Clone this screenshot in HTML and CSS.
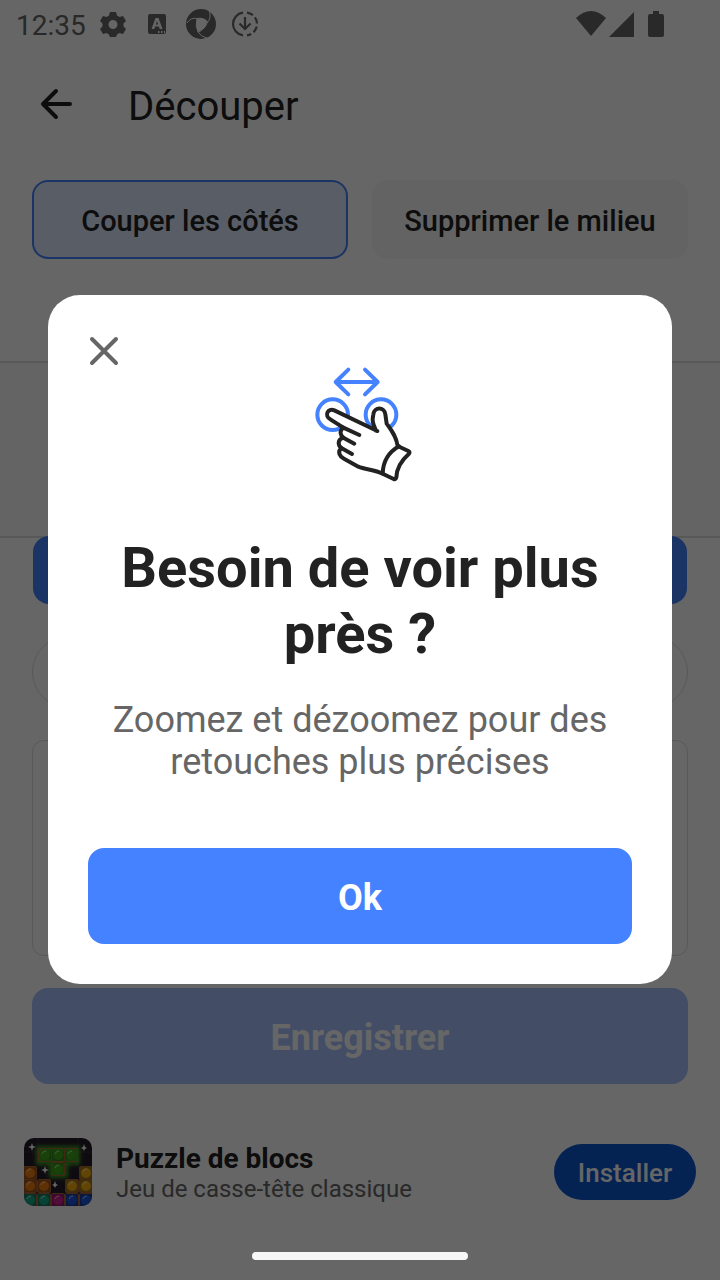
FILE: index.html
```html
<!DOCTYPE html>
<html lang="fr">
<head>
<meta charset="utf-8">
<meta name="viewport" content="width=device-width, initial-scale=1">
<title>Découper</title>
<link rel="stylesheet" href="styles.css">
</head>
<body>
<div class="screen">
  <div class="status">
    <span class="clock">12:35</span>
    <svg class="status-left" width="170" height="32" viewBox="0 0 170 32" fill="currentColor" aria-hidden="true">
      <path fill-rule="evenodd" d="M10 4h6l1 3.500 2.500 1.500 3.500-1 3 5-2.500 2.500v3L26 21l-3 5-3.500-1-2.500 1.500-1 2.500h-6l-1-2.500L6.500 25 3 26l-3-5 2.500-2.500v-3L0 13l3-5 3.500 1L9 7.500zm3 8a4.500 4.500 0 1 0 0 9 4.500 4.500 0 0 0 0-9z"/>
      <path fill-rule="evenodd" d="M50 6h14q2 0 2 2v16q0 2-2 2H50q-2 0-2-2V8q0-2 2-2zm5.500 4-4 11h2.800l.8-2.500h3.800l.8 2.500h2.800l-4-11zm1.500 3 1.200 3.500h-2.400zM58 23v2h1.500v-2zm3 0v2h1.500v-2zm3 0v2h1v-2z"/>
      <circle cx="101" cy="16" r="15"/>
      <path fill="#fff" d="M97 11q4-1.500 7 0 3 1 3 4-2 6-9 9-3-6-1-13z"/>
      <path fill="none" stroke="#fff" stroke-width="1" d="M87 15q4-6 10-4.500 6-1.500 11 3.500M109 2q3 8-2 13-2 6-9 9.500M97 11q-2 6 1 13 3 5 9 6"/>
      <g fill="none" stroke="currentColor" stroke-width="2.200">
        <path d="M143 4.600a11.500 11.500 0 0 0 0 22.800"/>
        <path d="M147 4.600a11.500 11.500 0 0 1 0 22.800" stroke-dasharray="6.500 3"/>
        <path d="M145 9v12M139.500 15.500 145 21l5.500-5.500"/>
      </g>
    </svg>
    <svg class="status-right" width="90" height="32" viewBox="0 0 90 32" fill="currentColor" aria-hidden="true">
      <path d="M0 10q15-14 30 0L15 28z"/><path d="M58 4v25H33z"/><path d="M77 3h6v3h3q2 0 2 2v19q0 2-2 2H74q-2 0-2-2V8q0-2 2-2h3z"/>
    </svg>
  </div>

  <header class="topbar">
    <button class="icon-button" type="button" aria-label="Retour">
      <svg width="32" height="32" viewBox="0 0 32 32" fill="none" stroke="currentColor" stroke-width="4" stroke-linecap="round" stroke-linejoin="round"><path d="M30 16H3M16 3 3 16l13 13"/></svg>
    </button>
    <h1 class="title">Découper</h1>
  </header>

  <div class="modes">
    <button class="mode mode-active" type="button">Couper les côtés</button>
    <button class="mode" type="button">Supprimer le milieu</button>
  </div>

  <main class="editor">
    <div class="waveform"></div>
    <div class="range"></div>
    <div class="pill"></div>
    <div class="panel"></div>
    <button class="save" type="button">Enregistrer</button>
  </main>

  <aside class="ad">
    <svg class="ad-icon" viewBox="0 0 68 68" aria-hidden="true">
      <defs>
        <filter id="glow" x="-50%" y="-50%" width="200%" height="200%"><feGaussianBlur stdDeviation="2"/></filter>
        <g id="gem"><rect x=".5" y=".5" width="13" height="13" rx="1" fill-opacity=".6" stroke="#a66436"/><circle cx="7" cy="7" r="5"/><path d="M4 6q1-3 4-3" fill="none" stroke="#fff" stroke-opacity=".6"/></g>
      </defs>
      <rect width="68" height="68" fill="#241c28"/>
      <path d="M0 14h68M14 0v28M54 0v28" stroke="#39303c"/>
      <path d="M14 10h40v15H42v13H27V25H14z" fill="#1d4a12" stroke="#48c522" stroke-width="3" filter="url(#glow)"/>
      <g fill="#3fa51c"><use href="#gem" x="14" y="10"/><use href="#gem" x="27" y="10"/><use href="#gem" x="40" y="10"/><use href="#gem" x="27" y="24"/></g>
      <g fill="#ee7a12"><use href="#gem" x="-1" y="28"/><use href="#gem" y="41" x="-1"/><use href="#gem" x="13" y="41"/></g>
      <g fill="#f3ad12"><use href="#gem" x="55" y="28"/><use href="#gem" x="41" y="41"/><use href="#gem" x="55" y="41"/></g>
      <g fill="#12a983"><use href="#gem" x="-1" y="55"/><use href="#gem" x="13" y="55"/></g>
      <use href="#gem" x="27" y="55" fill="#cf1c91"/>
      <g fill="#1c55dd"><use href="#gem" x="41" y="55"/><use href="#gem" x="55" y="55"/></g>
      <path fill="#fff" d="m8 5 1 3 3 1-3 1-1 3-1-3-3-1 3-1zM60 6l1 3 2 1-2 1-1 2-1-2-2-1 2-1zM21 28l1 3 3 1-3 1-1 3-1-3-3-1 3-1zM31 43l1 3 2 1-2 1-1 2-1-2-2-1 2-1z"/>
    </svg>
    <div class="ad-text">
      <strong class="ad-name">Puzzle de blocs</strong>
      <span class="ad-info">Jeu de casse-tête classique</span>
    </div>
    <button class="install" type="button">Installer</button>
  </aside>
</div>

<div class="overlay">
  <section class="dialog" role="dialog" aria-modal="true" aria-labelledby="dialog-title">
    <button class="icon-button close" type="button" aria-label="Fermer">
      <svg width="32" height="32" viewBox="0 0 32 32" fill="none" stroke="currentColor" stroke-width="4" stroke-linecap="round"><path d="m4 4 24 24M28 4 4 28"/></svg>
    </button>
    <svg class="pinch" width="130" height="140" viewBox="0 0 390 420" fill="none" stroke-linecap="round" stroke-linejoin="round" aria-hidden="true">
      <g stroke="#4582ff" stroke-width="12">
        <path d="M107 96h126M145 59l-38 37 38 37M195 59l38 37-38 37"/>
        <circle cx="98" cy="194" r="46"/><circle cx="243" cy="194" r="46"/>
      </g>
      <path fill="#fff" stroke="#222" stroke-width="12" d="M232 243 103 181C83 172 72 198 91 208l39 25c-13 10-9 23 0 30-18 6-17 22-6 31-13 12-5 25 8 32l43 24c22 9 49 9 73 21l33 16q7 2 8-5c1-29 14-50 38-71q4-5-2-8l-32-15c-4-29-19-48-33-67l-4-28c-3-23-33-23-36 0-5 22 0 30 8 49z"/>
      <path stroke="#222" stroke-width="12" d="m130 233 48 22M130 263l33 18M124 294l32 18M248 371c1-34 17-64 49-82"/>
    </svg>
    <h2 class="dialog-title" id="dialog-title">Besoin de voir plus près ?</h2>
    <p class="dialog-copy">Zoomez et dézoomez pour des retouches plus précises</p>
    <button class="ok" type="button">Ok</button>
  </section>
  <div class="home-bar"></div>
</div>
</body>
</html>
```
FILE: styles.css
```css
* { box-sizing: border-box; }
body { margin: 0; background: #fff; font-family: Roboto, "Noto Sans", sans-serif; color: #222; }
button { border: 0; padding: 0; font-family: inherit; color: inherit; background: none; }
svg { display: block; }
h1, h2, p { margin: 0; }

.screen { min-height: 100vh; display: flex; flex-direction: column; }

.status { height: 48px; padding: 0 54px 0 16px; display: flex; align-items: center; color: #666; }
.clock { width: 72px; font-size: 28px; line-height: 48px; padding-top: 3px; }
.status-left { margin-left: 12px; }
.status-right { margin-left: auto; }

.topbar { height: 112px; padding: 0 40px; display: flex; align-items: center; gap: 56px; }
.icon-button { display: flex; width: 32px; height: 32px; }
.title { font-size: 40px; line-height: 48px; font-weight: 400; padding-top: 6px; }

.modes { display: grid; grid-template-columns: 1fr 1fr; gap: 24px; padding: 20px 32px 0; }
.mode { height: 79px; border-radius: 16px; background: #f7f7f7; font-size: 29px; font-weight: 500; padding-top: 2px; }
.mode-active { background: #dfe9ff; border: 2px solid #4582ff; }

.editor { padding: 102px 32px 0; display: flex; flex-direction: column; }
.waveform { height: 177px; margin: 0 -32px; border: solid #ddd; border-width: 2px 0; background: #fbfbfb; }
.range { height: 68px; margin: -2px 1px 0; border-radius: 16px; background: #4582ff; }
.pill { height: 72px; margin-top: 32px; border: 1px solid #ddd; border-radius: 36px; }
.panel { height: 216px; margin-top: 32px; border: 1px solid #ddd; border-radius: 12px; }
.save { height: 96px; margin-top: 32px; border-radius: 16px; background: #a7c3ff; color: #fff; font-size: 36px; font-weight: 700; padding-top: 4px; }

.ad { display: flex; align-items: center; gap: 24px; padding: 54px 24px 0; }
.ad-icon { width: 68px; height: 68px; border-radius: 10px; overflow: hidden; }
.ad-text { display: flex; flex-direction: column; flex: 1; padding-top: 2px; }
.ad-name { font-size: 28px; line-height: 32px; font-weight: 700; }
.ad-info { font-size: 24px; line-height: 28px; color: #666; }
.install { width: 142px; height: 56px; border-radius: 28px; background: #0b57d0; color: #fff; font-size: 26px; font-weight: 500; padding-top: 2px; }

.overlay { position: fixed; inset: 0; display: flex; align-items: center; justify-content: center; padding: 0 48px 1px; background: rgba(0, 0, 0, .6); }
.dialog { width: 100%; padding: 40px; border-radius: 32px; background: #fff; display: flex; flex-direction: column; align-items: center; text-align: center; }
.close { align-self: flex-start; color: #666; }
.pinch { margin: -17px 0 0 10px; }
.dialog-title { margin-top: 45px; font-size: 56px; line-height: 66px; font-weight: 700; }
.dialog-copy { margin-top: 32px; font-size: 36px; line-height: 42px; color: #666; }
.ok { width: 100%; height: 96px; margin-top: 65px; border-radius: 16px; background: #4582ff; color: #fff; font-size: 36px; font-weight: 700; padding-top: 4px; }
.home-bar { position: absolute; bottom: 20px; left: 35%; right: 35%; height: 8px; border-radius: 4px; background: #f7f7f7; }
```
